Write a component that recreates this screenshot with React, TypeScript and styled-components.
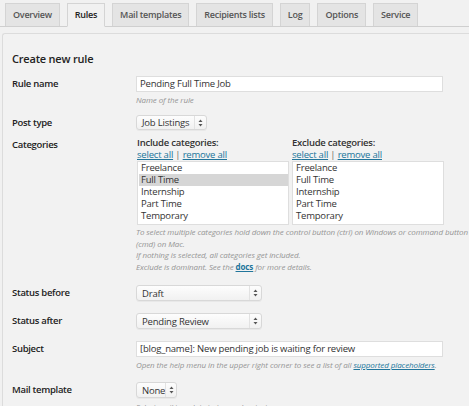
import React from 'react';
import styled, { createGlobalStyle } from 'styled-components';

const GlobalStyle = createGlobalStyle`
    html, body {
        margin: 0;
        padding: 0;
        background: #f1f1f1;
        overflow: hidden;
    }
    body {
        font-family: "Open Sans", "Noto Sans", sans-serif;
        color: #333;
    }
`;

const Page = styled.div`
    width: 469px;
    height: 406px;
    overflow: hidden;
`;

const TabBar = styled.div`
    display: flex;
    align-items: flex-end;
    gap: 7px;
    height: 23px;
    padding: 3px 0 0 5px;
    border-bottom: 1px solid #cfcfcf;
`;

const Tab = styled.div<{ $active?: boolean }>`
    height: 22px;
    line-height: 22px;
    padding: 0 7px;
    font-size: 9px;
    letter-spacing: -0.25px;
    font-weight: 600;
    color: ${p => (p.$active ? '#222' : '#555')};
    background: ${p => (p.$active ? '#f1f1f1' : '#e4e4e4')};
    border: 1px solid #d4d4d4;
    border-bottom: ${p => (p.$active ? '1px solid #f1f1f1' : 'none')};
    margin-bottom: ${p => (p.$active ? '-1px' : '0')};
    white-space: nowrap;
`;

const Panel = styled.div`
    margin: 6px 0 0 2px;
    width: 600px;
    border: 1px solid #dcdcdc;
    border-right: none;
    border-radius: 3px 0 0 0;
    background: #f2f2f2;
    padding: 17px 0 0 9px;
`;

const Title = styled.div`
    font-size: 11px;
    letter-spacing: -0.2px;
    font-weight: 600;
    color: #222;
    line-height: 16px;
    margin-bottom: 3px;
`;

const Row = styled.div<{ $top?: number }>`
    display: flex;
    padding: ${p => p.$top ?? 6}px 0 6px;
`;

const Label = styled.div<{ $offset?: number }>`
    width: 124px;
    flex: none;
    margin-top: ${p => p.$offset ?? 0}px;
    font-size: 9.5px;
    letter-spacing: -0.3px;
    font-weight: 600;
    color: #222;
    line-height: 16px;
`;

const Field = styled.div`
    display: flex;
    flex-direction: column;
    align-items: flex-start;
`;

const TextInput = styled.div`
    box-sizing: border-box;
    width: 307px;
    height: 16px;
    line-height: 14px;
    padding: 0 3px;
    background: #fff;
    border: 1px solid #dedede;
    font-size: 9.5px;
    letter-spacing: -0.2px;
    color: #333;
    white-space: nowrap;
`;

const Help = styled.div<{ $gap?: number }>`
    margin-top: ${p => p.$gap ?? 3}px;
    font-size: 8px;
    letter-spacing: -0.1px;
    font-style: italic;
    color: #959595;
    line-height: 10px;
    white-space: nowrap;
`;

const HelpBlock = styled(Help)`
    line-height: 11.5px;
    margin-top: 1px;
`;

const HelpLink = styled.a<{ $bold?: boolean }>`
    color: #21759b;
    text-decoration: underline;
    font-weight: ${p => (p.$bold ? 700 : 400)};
    font-style: ${p => (p.$bold ? 'normal' : 'italic')};
`;

const SelectBox = styled.div<{ $width: number; $height?: number }>`
    box-sizing: border-box;
    width: ${p => p.$width}px;
    height: ${p => p.$height ?? 16}px;
    display: flex;
    align-items: center;
    background: linear-gradient(#fdfdfd, #f1f1f1);
    border: 1px solid #d8d8d8;
    border-radius: 3px;
    box-shadow: 0 1px 0 rgba(0, 0, 0, 0.04);
    font-size: 9.5px;
    letter-spacing: -0.2px;
    color: #333;
`;

const SelectText = styled.span`
    flex: 1;
    padding-left: 5px;
    white-space: nowrap;
`;

const SelectArrow = styled.span`
    width: 11px;
    height: 100%;
    display: flex;
    align-items: center;
    justify-content: center;
    border-left: 1px solid #e2e2e2;
`;

const Arrows = () => (
    <svg width="5" height="8" viewBox="0 0 5 8">
        <path d="M2.5 0.5 L4.5 3 L0.5 3 Z" fill="#555" />
        <path d="M2.5 7.5 L4.5 5 L0.5 5 Z" fill="#555" />
    </svg>
);

const Select = ({ value, width, height }: { value: string; width: number; height?: number }) => (
    <SelectBox $width={width} $height={height}>
        <SelectText>{value}</SelectText>
        <SelectArrow>
            <Arrows />
        </SelectArrow>
    </SelectBox>
);

const CategoryCols = styled.div`
    display: flex;
    gap: 3px;
    padding-left: 1px;
`;

const CategoryCol = styled.div`
    width: 152px;
`;

const ColHead = styled.div`
    font-size: 9.5px;
    letter-spacing: -0.25px;
    font-weight: 600;
    color: #333;
    line-height: 12px;
`;

const Links = styled.div`
    font-size: 9.5px;
    letter-spacing: -0.2px;
    line-height: 12px;
    color: #666;
    white-space: nowrap;
`;

const Link = styled.a`
    color: #21759b;
    text-decoration: underline;
`;

const ListBox = styled.div`
    box-sizing: border-box;
    height: 64px;
    background: #fff;
    border: 1px solid #dedede;
    padding: 0 0 2px 1px;
`;

const ListItem = styled.div<{ $selected?: boolean }>`
    height: 12px;
    line-height: 12px;
    padding-left: 2px;
    font-size: 9.5px;
    letter-spacing: -0.2px;
    color: #333;
    background: ${p => (p.$selected ? '#d6d6d6' : 'transparent')};
`;

const categories = ['Freelance', 'Full Time', 'Internship', 'Part Time', 'Temporary'];

const CategoryList = ({ title, selected }: { title: string; selected?: string }) => (
    <CategoryCol>
        <ColHead>{title}</ColHead>
        <Links>
            <Link>select all</Link> | <Link>remove all</Link>
        </Links>
        <ListBox>
            {categories.map(c => (
                <ListItem key={c} $selected={c === selected}>{c}</ListItem>
            ))}
        </ListBox>
    </CategoryCol>
);

const tabs = ['Overview', 'Rules', 'Mail templates', 'Recipients lists', 'Log', 'Options', 'Service'];

export default function App() {
    return (
        <Page>
            <GlobalStyle />
            <TabBar>
                {tabs.map(t => (
                    <Tab key={t} $active={t === 'Rules'}>{t}</Tab>
                ))}
            </TabBar>
            <Panel>
                <Title>Create new rule</Title>

                <Row>
                    <Label>Rule name</Label>
                    <Field>
                        <TextInput>Pending Full Time Job</TextInput>
                        <Help>Name of the rule</Help>
                    </Field>
                </Row>

                <Row $top={4}>
                    <Label>Post type</Label>
                    <Field>
                        <Select value="Job Listings" width={71} height={15} />
                    </Field>
                </Row>

                <Row $top={0}>
                    <Label $offset={0}>Categories</Label>
                    <Field>
                        <CategoryCols>
                            <CategoryList title="Include categories:" selected="Full Time" />
                            <CategoryList title="Exclude categories:" />
                        </CategoryCols>
                        <HelpBlock>
                            To select multiple categories hold down the control button (ctrl) on Windows or command button
                            <br />
                            (cmd) on Mac.
                            <br />
                            If nothing is selected, all categories get included.
                            <br />
                            Exclude is dominant. See the <HelpLink $bold>docs</HelpLink> for more details.
                        </HelpBlock>
                    </Field>
                </Row>

                <Row $top={7}>
                    <Label>Status before</Label>
                    <Field>
                        <Select value="Draft" width={126} />
                    </Field>
                </Row>

                <Row>
                    <Label>Status after</Label>
                    <Field>
                        <Select value="Pending Review" width={126} />
                    </Field>
                </Row>

                <Row>
                    <Label>Subject</Label>
                    <Field>
                        <TextInput>[blog_name]: New pending job is waiting for review</TextInput>
                        <Help>
                            Open the help menu in the upper right corner to see a list of all{' '}
                            <HelpLink>supported placeholders</HelpLink>.
                        </Help>
                    </Field>
                </Row>

                <Row>
                    <Label>Mail template</Label>
                    <Field>
                        <Select value="None" width={41} />
                        <Help $gap={4}>Select mail template to be used as text.</Help>
                    </Field>
                </Row>
            </Panel>
        </Page>
    );
}
